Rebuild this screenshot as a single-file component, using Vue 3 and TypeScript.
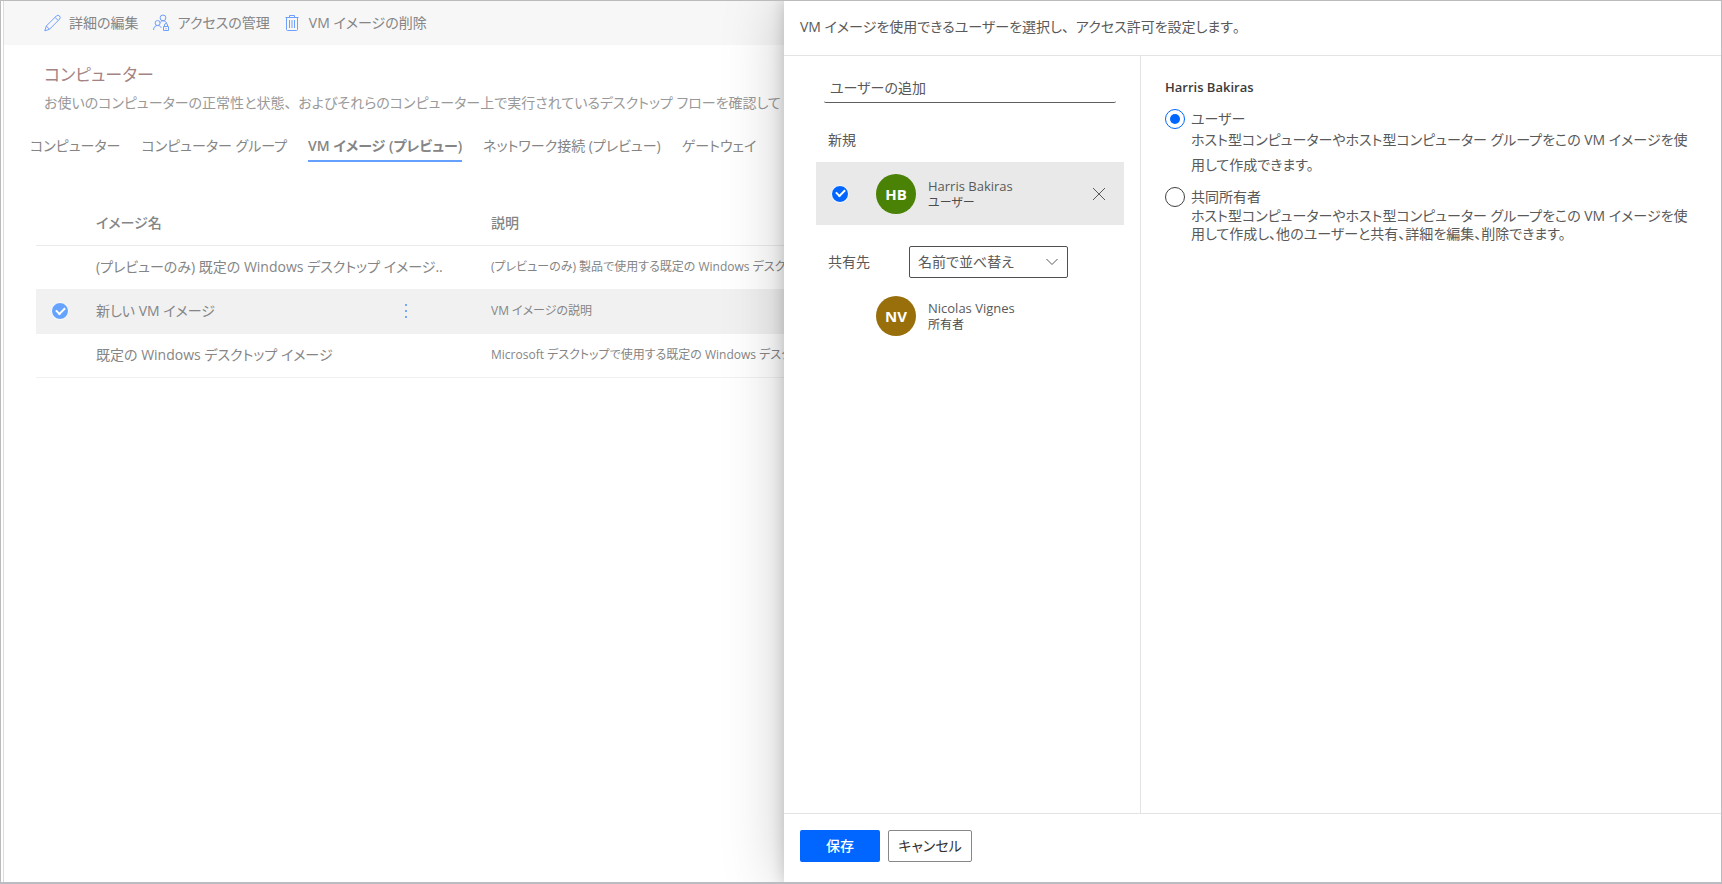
<script setup lang="ts">
import { ref } from 'vue'

interface ImageRow { id: number; name: string; description: string; selected: boolean }
interface Person { name: string; role: string; initials: string; tone: string }

const tabs: string[] = ['コンピューター', 'コンピューター グループ', 'VM イメージ (プレビュー)', 'ネットワーク接続 (プレビュー)', 'ゲートウェイ']
const activeTab = ref(2)

const images = ref<ImageRow[]>([
  { id: 1, name: '(プレビューのみ) 既定の Windows デスクトップ イメージ..', description: '(プレビューのみ) 製品で使用する既定の Windows デスクトップ', selected: false },
  { id: 2, name: '新しい VM イメージ', description: 'VM イメージの説明', selected: true },
  { id: 3, name: '既定の Windows デスクトップ イメージ', description: 'Microsoft デスクトップで使用する既定の Windows デスクトップ', selected: false },
])

const added: Person = { name: 'Harris Bakiras', role: 'ユーザー', initials: 'HB', tone: 'green' }
const owner: Person = { name: 'Nicolas Vignes', role: '所有者', initials: 'NV', tone: 'gold' }
const addedSelected = ref(true)
const permission = ref('user')
const query = ref('')
const sort = ref('name')
</script>

<template>
  <div class="shell">
    <main class="page">
      <div class="commands">
        <button type="button" class="command">
          <svg width="18" height="18" viewBox="0 0 18 18" fill="none" stroke="currentColor"><path d="M.8 16.800 2.300 12 12.300 2a2.200 2.200 0 0 1 3.200 3.200L5.500 15.300z M11 3.300l3.200 3.200 M2.300 12 5.500 15.300" /></svg>
          詳細の編集
        </button>
        <button type="button" class="command">
          <svg width="18" height="18" viewBox="0 0 18 18" fill="none" stroke="currentColor"><circle cx="10" cy="3.900" r="2.900" /><circle cx="4.600" cy="9" r="2.500" /><path d="M.6 16c0-2.900 1.500-4.500 4-4.500 1.800 0 3 .8 3.600 2.300 M7.100 8.700c.7-1.200 1.700-1.900 2.900-1.900 1.700 0 3 .8 3.600 2.200" /><path d="M10.500 12.500h5v4h-5z M11.500 12.500v-1.500a1.500 1.500 0 0 1 3 0v1.500 M13 14v1.200" /></svg>
          アクセスの管理
        </button>
        <button type="button" class="command">
          <svg width="18" height="18" viewBox="0 0 18 18" fill="none" stroke="currentColor"><path d="M1.500 3.500h13 M5.500 3.500v-2h5v2 M2.500 3.500v12q0 1 1 1h9q1 0 1-1v-12 M5.500 6v8 M8 6v8 M10.500 6v8" /></svg>
          VM イメージの削除
        </button>
      </div>

      <header class="intro">
        <h1>コンピューター</h1>
        <p>お使いのコンピューターの正常性と状態<span class="stop">、</span>およびそれらのコンピューター上で実行されているデスクトップ フローを確認して</p>
      </header>

      <nav class="tabs">
        <button v-for="(tab, i) in tabs" :key="tab" type="button" class="tab" :class="{ active: i === activeTab }" @click="activeTab = i">{{ tab }}</button>
      </nav>

      <table class="images">
        <colgroup><col class="col-check" /><col class="col-name" /><col /></colgroup>
        <thead>
          <tr><th></th><th scope="col">イメージ名</th><th scope="col">説明</th></tr>
        </thead>
        <tbody>
          <tr v-for="row in images" :key="row.id" :class="{ selected: row.selected }">
            <td class="check-cell"><input v-if="row.selected" v-model="row.selected" type="checkbox" class="check" :aria-label="row.name" /></td>
            <td>
              <div class="name-cell">
                <span>{{ row.name }}</span>
                <button v-if="row.selected" type="button" class="more" aria-label="その他のコマンド"><i></i><i></i><i></i></button>
              </div>
            </td>
            <td class="description">{{ row.description }}</td>
          </tr>
        </tbody>
      </table>
    </main>

    <section class="panel" role="dialog" aria-labelledby="panel-title">
      <h2 id="panel-title" class="panel-title">VM イメージを使用できるユーザーを選択し<span class="stop">、</span>アクセス許可を設定します<span class="stop">。</span></h2>

      <div class="panel-body">
        <div class="people">
          <input v-model="query" class="search" type="text" placeholder="ユーザーの追加" aria-label="ユーザーの追加" />
          <h3 class="group">新規</h3>
          <div class="person chosen">
            <input v-model="addedSelected" type="checkbox" class="check" :aria-label="added.name" />
            <span class="avatar" :class="added.tone">{{ added.initials }}</span>
            <div class="who"><span class="who-name">{{ added.name }}</span><span class="who-role">{{ added.role }}</span></div>
            <button type="button" class="remove" aria-label="削除">
              <svg width="14" height="14" viewBox="0 0 14 14" fill="none" stroke="currentColor"><path d="M1 1l12 12M13 1 1 13" /></svg>
            </button>
          </div>
          <div class="shared">
            <label for="sort" class="shared-label">共有先</label>
            <div class="dropdown">
              <select id="sort" v-model="sort"><option value="name">名前で並べ替え</option></select>
              <svg width="12" height="8" viewBox="0 0 12 8" fill="none" stroke="currentColor"><path d="M.5 1 6 6.500 11.500 1" /></svg>
            </div>
          </div>
          <div class="person">
            <span class="avatar" :class="owner.tone">{{ owner.initials }}</span>
            <div class="who"><span class="who-name">{{ owner.name }}</span><span class="who-role">{{ owner.role }}</span></div>
          </div>
        </div>

        <div class="access">
          <h3 class="access-name">Harris Bakiras</h3>
          <div class="option">
            <input id="as-user" v-model="permission" type="radio" name="permission" value="user" />
            <div>
              <label for="as-user">ユーザー</label>
              <p class="roomy">ホスト型コンピューターやホスト型コンピューター グループをこの VM イメージを使用して作成できます。</p>
            </div>
          </div>
          <div class="option">
            <input id="as-owner" v-model="permission" type="radio" name="permission" value="owner" />
            <div>
              <label for="as-owner">共同所有者</label>
              <p>ホスト型コンピューターやホスト型コンピューター グループをこの VM イメージを使用して作成し、他のユーザーと共有、詳細を編集、削除できます。</p>
            </div>
          </div>
        </div>
      </div>

      <footer class="actions">
        <button type="button" class="save">保存</button>
        <button type="button" class="cancel">キャンセル</button>
      </footer>
    </section>
  </div>
</template>

<style>
body { margin: 0; }
</style>

<style scoped>
* { box-sizing: border-box; }
.shell {
  position: relative;
  min-height: 100vh;
  overflow: hidden;
  border: 1px solid #bbbbbd;
  border-bottom: 2px solid #b9bcc3;
  background: #fff;
  color: #595959;
  font: 14px/20px "Open Sans", "Noto Sans CJK JP", sans-serif;
  font-feature-settings: "palt";
}
button, input, select { font: inherit; font-feature-settings: inherit; color: inherit; }
button { padding: 0; border: 0; background: none; white-space: nowrap; cursor: pointer; }
h1, h2, h3, p { margin: 0; font-weight: 400; }
svg { display: block; flex: none; }
.stop { font-feature-settings: normal; }

.page { margin-left: 2px; border-left: 1px solid #dcdcdc; min-height: calc(100vh - 3px); color: #858585; white-space: nowrap; }
.commands { display: flex; align-items: center; gap: 14px; height: 44px; padding-left: 40px; background: #f7f7f7; }
.command { display: flex; align-items: center; gap: 7px; }
.command svg { color: #70a0ff; }
.intro { padding: 18px 0 0 40px; }
.intro h1 { font-size: 17px; line-height: 24px; color: #a58383; }
.intro p { margin-top: 6px; color: #999; }
.tabs { display: flex; gap: 21px; padding: 21px 0 0 26px; }
.tab { height: 28px; padding-bottom: 2px; border-bottom: 2px solid transparent; }
.tab.active { font-weight: 600; border-color: #66a0ff; }

.images { width: calc(100% - 32px); margin: 39px 0 0 32px; border-collapse: collapse; table-layout: fixed; }
.col-check { width: 60px; }
.col-name { width: 395px; }
.images th, .images td { height: 44px; padding: 0; text-align: left; border-bottom: 1px solid #f1f1f1; overflow: hidden; }
.images th { font-weight: 500; border-color: #ebebeb; }
.images .description { font-size: 12px; }
.selected { background: #f1f1f1; }
.name-cell { display: flex; align-items: center; justify-content: space-between; padding-right: 75px; }
.more { display: flex; flex-direction: column; align-items: center; gap: 4px; width: 20px; }
.more i { width: 2px; height: 2px; background: #75a9fa; }
.check-cell { line-height: 0; }
.check {
  appearance: none;
  display: inline-flex;
  align-items: center;
  justify-content: center;
  flex: none;
  width: 18px;
  height: 18px;
  margin: 0;
  border: 1px solid #fff;
  border-radius: 50%;
  background: #06f;
}
.check::after { content: ""; width: 7px; height: 4px; margin-bottom: 3px; border: solid #fff; border-width: 0 0 2px 2px; transform: rotate(-45deg); }
.images .check { margin-left: 15px; background: #66a3ff; }

.panel {
  position: absolute;
  inset: 0 0 0 783px;
  display: flex;
  flex-direction: column;
  background: #fff;
  box-shadow: 0 0 58px rgba(0, 0, 0, 0.22), 0 0 14px rgba(0, 0, 0, 0.18);
}
.panel-title { padding: 16px 16px 18px; border-bottom: 1px solid #e3e3e3; font-size: 14px; line-height: 20px; }
.panel-body { flex: 1; display: flex; }
.people { flex: 0 0 357px; padding: 16px 16px 0 32px; border-right: 1px solid #e3e3e3; }
.search { display: block; width: calc(100% - 16px); height: 31px; margin-left: 8px; padding: 0 6px; border: 0; border-bottom: 1px solid #605e5c; border-radius: 2px; outline: 0; background: none; }
.search::placeholder { color: #595959; opacity: 1; }
.group { margin: 27px 0 12px 12px; font-size: 14px; line-height: 20px; }
.person { display: flex; align-items: center; height: 63px; padding-left: 60px; }
.person.chosen { padding: 0 18px 0 15px; background: #e9e9e9; }
.chosen .avatar { margin-left: 27px; }
.avatar { display: flex; align-items: center; justify-content: center; flex: none; width: 40px; height: 40px; border-radius: 50%; color: #fff; font-size: 15px; font-weight: 700; }
.green { background: #498205; }
.gold { background: #986f0b; }
.who { flex: 1; display: flex; flex-direction: column; margin-left: 12px; }
.who-name { font-size: 13px; line-height: 18px; }
.who-role { font-size: 12px; line-height: 16px; color: #4c4c4c; }
.shared { display: flex; align-items: center; margin: 21px 0 6px 12px; }
.shared-label { width: 81px; }
.dropdown { position: relative; width: 159px; }
.dropdown select { appearance: none; display: block; width: 100%; height: 32px; padding: 0 28px 0 8px; border: 1px solid #505050; border-radius: 2px; background: #fff; }
.dropdown svg { position: absolute; right: 10px; top: 12px; pointer-events: none; }

.access { flex: 1; padding: 21px 30px 0 24px; }
.access-name { font-size: 13px; line-height: 20px; font-weight: 600; color: #3b3b3b; }
.option { display: flex; gap: 6px; }
.access-name + .option { margin-top: 12px; }
.option label { display: block; line-height: 20px; }
.option p { line-height: 18px; }
.option .roomy { margin-top: -2px; padding-bottom: 10px; line-height: 25px; }
.option input { appearance: none; display: flex; align-items: center; justify-content: center; flex: none; width: 20px; height: 20px; margin: 0; border: 1px solid #404040; border-radius: 50%; }
.option input:checked { border-color: #06f; }
.option input:checked::after { content: ""; width: 10px; height: 10px; border-radius: 50%; background: #06f; }

.actions { display: flex; gap: 8px; padding: 16px 16px 20px; border-top: 1px solid #e3e3e3; }
.actions button { height: 32px; border-radius: 2px; }
.save { width: 80px; background: #06f; color: #fff; font-weight: 500; }
.cancel { width: 84px; border: 1px solid #8a8886; color: #323130; }
</style>
